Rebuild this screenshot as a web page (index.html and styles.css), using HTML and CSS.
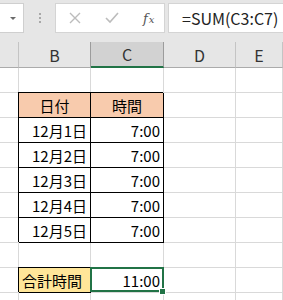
FILE: index.html
```html
<!DOCTYPE html>
<html lang="ja">
<head>
    <meta charset="UTF-8">
    <title>合計時間</title>
    <link rel="stylesheet" href="styles.css">
</head>
<body>
    <!-- formula bar -->
    <div class="toolbar">
        <div class="nameBox"><span class="arrow"></span></div>
        <div class="dots"><span></span><span></span><span></span></div>
        <div class="editBox">
            <svg class="icon" width="12" height="12" viewBox="0 0 12 12">
                <path d="M1 1 L11 11 M11 1 L1 11" stroke="#bcbcbc" stroke-width="1.4" fill="none"/>
            </svg>
            <svg class="icon" width="14" height="12" viewBox="0 0 14 12">
                <path d="M1 6 L5 10 L13 1" stroke="#bcbcbc" stroke-width="1.6" fill="none"/>
            </svg>
            <span class="fx"><i>f</i><i class="sub">x</i></span>
        </div>
        <div class="formulaBox">=SUM(C3:C7)</div>
    </div>

    <!-- sheet -->
    <div class="sheet">
        <div class="c h"></div>
        <div class="c h beforeSel">B</div>
        <div class="c h sel">C</div>
        <div class="c h">D</div>
        <div class="c h">E</div>

        <div class="c"></div><div class="c"></div><div class="c"></div><div class="c"></div><div class="c"></div>

        <div class="c"></div>
        <div class="c t head center">日付</div>
        <div class="c t head center">時間</div>
        <div class="c"></div><div class="c"></div>

        <div class="c"></div><div class="c t">12月1日</div><div class="c t">7:00</div><div class="c"></div><div class="c"></div>
        <div class="c"></div><div class="c t">12月2日</div><div class="c t">7:00</div><div class="c"></div><div class="c"></div>
        <div class="c"></div><div class="c t">12月3日</div><div class="c t">7:00</div><div class="c"></div><div class="c"></div>
        <div class="c"></div><div class="c t">12月4日</div><div class="c t">7:00</div><div class="c"></div><div class="c"></div>
        <div class="c"></div><div class="c t">12月5日</div><div class="c t">7:00</div><div class="c"></div><div class="c"></div>

        <div class="c"></div><div class="c"></div><div class="c"></div><div class="c"></div><div class="c"></div>

        <div class="c"></div>
        <div class="c t total left">合計時間</div>
        <div class="c active">11:00</div>
        <div class="c"></div><div class="c"></div>

        <div class="c"></div><div class="c"></div><div class="c"></div><div class="c"></div><div class="c"></div>
    </div>
</body>
</html>
```

FILE: styles.css
```css
body {
    margin: 0;
    overflow: hidden;
    background: #fff;
    font-family: "Noto Sans CJK JP", "Noto Sans", sans-serif;
    color: #000;
}

/* formula bar */
.toolbar {
    display: flex;
    align-items: flex-start;
    height: 42px;
    padding-top: 3px;
    box-sizing: border-box;
    background-color: #e6e6e6;
}

.nameBox {
    width: 24px;
    height: 30px;
    box-sizing: border-box;
    background: #fff;
    border: 1px solid #cfcfcf;
    border-left: none;
    display: flex;
    align-items: center;
    justify-content: flex-end;
    padding-right: 7px;
}

.arrow {
    width: 0;
    height: 0;
    border-left: 3px solid transparent;
    border-right: 3px solid transparent;
    border-top: 3px solid #6a6a6a;
}

.dots {
    width: 31px;
    height: 30px;
    display: flex;
    flex-direction: column;
    align-items: center;
    justify-content: center;
    gap: 2px;
}

.dots span {
    width: 2px;
    height: 2px;
    background-color: #a8a8a8;
}

.editBox {
    width: 110px;
    height: 30px;
    box-sizing: border-box;
    background: #fff;
    border: 1px solid #d4d4d4;
    display: flex;
    align-items: center;
    padding-left: 13px;
}

.editBox .icon {
    margin-right: 22px;
}

.editBox .icon + .icon {
    margin-left: 2px;
    margin-right: 24px;
}

.fx {
    font-family: "DejaVu Serif", "Liberation Serif", serif;
    font-size: 13px;
    color: #555;
}

.fx .sub {
    font-size: 10px;
    margin-left: 1px;
}

.formulaBox {
    flex: 1;
    height: 30px;
    margin-left: 3px;
    box-sizing: border-box;
    background: #fff;
    border: 1px solid #d4d4d4;
    border-right: none;
    padding-left: 13px;
    display: flex;
    align-items: center;
    font-size: 16px;
    color: #222;
    white-space: nowrap;
}

/* sheet grid */
.sheet {
    display: grid;
    grid-template-columns: 19px 72px 73px 72px 1fr;
    grid-template-rows: 26px;
    grid-auto-rows: 25px;
}

.c {
    box-sizing: border-box;
    border-right: 1px solid #d9d9d9;
    border-bottom: 1px solid #d9d9d9;
    display: flex;
    align-items: center;
    justify-content: flex-end;
    padding: 0 3px 0 0;
    font-size: 15px;
    white-space: nowrap;
}

.h {
    background-color: #e6e6e6;
    border-right-color: #c4c4c4;
    border-bottom-color: #ababab;
    justify-content: center;
    padding: 0;
    font-size: 16px;
    color: #333;
}

.h.beforeSel {
    border-right-color: #9c9c9c;
}

.h.sel {
    background-color: #d2d2d2;
    border-right-color: #9c9c9c;
    border-bottom: 2px solid #217346;
}

/* bordered table */
.t {
    border-right-color: #000;
    border-bottom-color: #000;
    box-shadow: -1px -1px 0 #000;
}

.head {
    background-color: #f8cbad;
}

.total {
    background-color: #ffe699;
}

.center {
    justify-content: center;
    padding: 0;
}

.left {
    justify-content: flex-start;
    padding-left: 3px;
}

/* active cell */
.active {
    position: relative;
}

.active::after {
    content: "";
    position: absolute;
    top: -1px;
    left: -1px;
    width: 74px;
    height: 25px;
    box-sizing: border-box;
    border: 2px solid #217346;
}

.active::before {
    content: "";
    position: absolute;
    top: 21px;
    left: 69px;
    width: 5px;
    height: 5px;
    background-color: #217346;
    box-shadow: 0 0 0 1px #fff;
    z-index: 1;
}
```
